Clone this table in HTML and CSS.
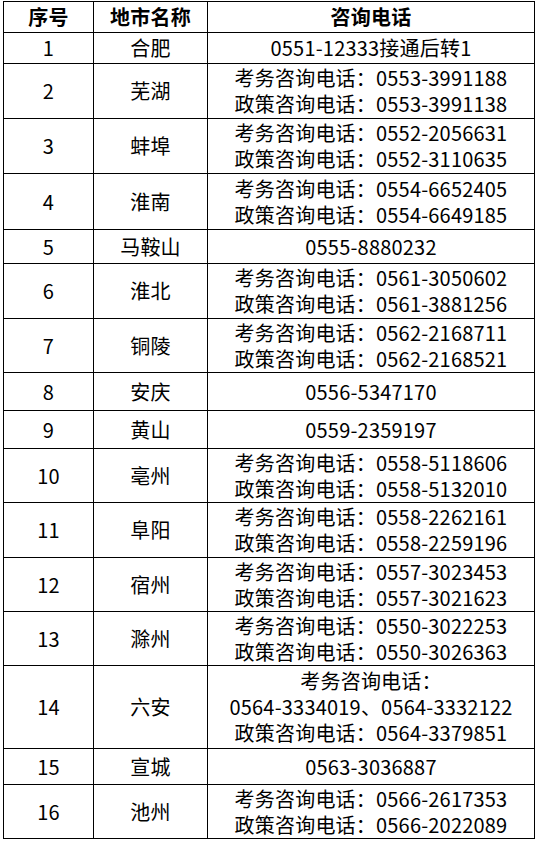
FILE: index.html
```html
<!DOCTYPE html>
<html lang="zh-CN">
<head>
<meta charset="utf-8">
<link rel="stylesheet" href="styles.css">
</head>
<body>
<table class="tbl">
<colgroup><col class="c1"><col class="c2"><col class="c3"></colgroup>
<thead>
<tr class="h31"><th>序号</th><th>地市名称</th><th>咨询电话</th></tr>
</thead>
<tbody>
<tr class="h31"><td>1</td><td>合肥</td><td>0551-12333接通后转1</td></tr>
<tr class="h55"><td>2</td><td>芜湖</td><td>考务咨询电话：0553-3991188<br>政策咨询电话：0553-3991138</td></tr>
<tr class="h55"><td>3</td><td>蚌埠</td><td>考务咨询电话：0552-2056631<br>政策咨询电话：0552-3110635</td></tr>
<tr class="h56"><td>4</td><td>淮南</td><td>考务咨询电话：0554-6652405<br>政策咨询电话：0554-6649185</td></tr>
<tr class="h34"><td>5</td><td>马鞍山</td><td>0555-8880232</td></tr>
<tr class="h55"><td>6</td><td>淮北</td><td>考务咨询电话：0561-3050602<br>政策咨询电话：0561-3881256</td></tr>
<tr class="h54"><td>7</td><td>铜陵</td><td>考务咨询电话：0562-2168711<br>政策咨询电话：0562-2168521</td></tr>
<tr class="h38"><td>8</td><td>安庆</td><td>0556-5347170</td></tr>
<tr class="h38"><td>9</td><td>黄山</td><td>0559-2359197</td></tr>
<tr class="h54"><td>10</td><td>亳州</td><td>考务咨询电话：0558-5118606<br>政策咨询电话：0558-5132010</td></tr>
<tr class="h55"><td>11</td><td>阜阳</td><td>考务咨询电话：0558-2262161<br>政策咨询电话：0558-2259196</td></tr>
<tr class="h54"><td>12</td><td>宿州</td><td>考务咨询电话：0557-3023453<br>政策咨询电话：0557-3021623</td></tr>
<tr class="h54"><td>13</td><td>滁州</td><td>考务咨询电话：0550-3022253<br>政策咨询电话：0550-3026363</td></tr>
<tr class="h83"><td>14</td><td>六安</td><td>考务咨询电话：<br>0564-3334019、0564-3332122<br>政策咨询电话：0564-3379851</td></tr>
<tr class="h36"><td>15</td><td>宣城</td><td>0563-3036887</td></tr>
<tr class="h54"><td>16</td><td>池州</td><td>考务咨询电话：0566-2617353<br>政策咨询电话：0566-2022089</td></tr>
</tbody>
</table>
</body>
</html>
```
FILE: styles.css
```css
html, body {
  margin: 0;
  padding: 0;
  background: #ffffff;
}
body {
  padding: 1px 0 0 3px;
  font-family: "Noto Sans CJK SC", "Noto Sans", sans-serif;
  color: #000000;
}
.tbl {
  border-collapse: collapse;
  width: 531px;
  table-layout: fixed;
  font-size: 20px;
  line-height: 26px;
  letter-spacing: 0.2px;
}
.c1 { width: 90px; }
.c2 { width: 114px; }
.c3 { width: 327px; }
.tbl th, .tbl td {
  border: 1px solid #000000;
  padding: 0;
  text-align: center;
  vertical-align: middle;
  white-space: nowrap;
}
.tbl th { font-weight: 700; }
.h31 { height: 31px; }
.h34 { height: 34px; }
.h36 { height: 36px; }
.h38 { height: 38px; }
.h54 { height: 54px; }
.h55 { height: 55px; }
.h56 { height: 56px; }
.h83 { height: 83px; }
```
